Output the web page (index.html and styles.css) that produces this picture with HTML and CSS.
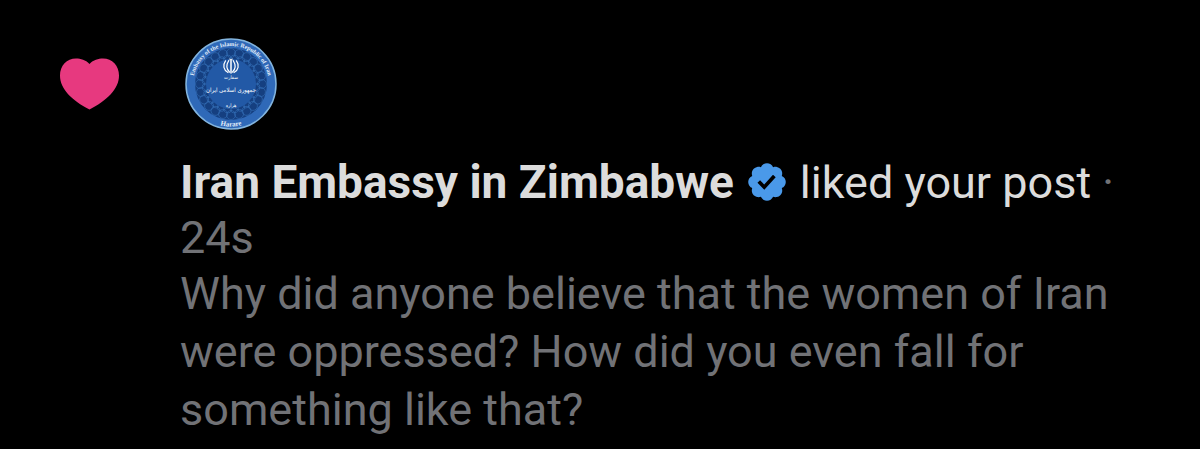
FILE: index.html
```html
<!DOCTYPE html>
<html lang="en">
<head>
<meta charset="utf-8">
<meta name="viewport" content="width=device-width, initial-scale=1">
<title>Notifications</title>
<link rel="stylesheet" href="styles.css">
</head>
<body>
<article class="notification">
  <svg class="heart" viewBox="0 0 60 52" role="img" aria-label="Like">
    <path d="M29.500 6C33.500 1.800 38.200 0.500 43 0.500C52.200 0.500 59 7.500 59 17.500C59 31 47 42.500 29.500 51.500C12 42.500 0 31 0 17.500C0 7.500 6.800 0.500 16 0.500C20.800 0.500 25.500 1.800 29.500 6Z"/>
  </svg>
  <div class="content">
    <a class="avatar" href="#" aria-label="Iran Embassy in Zimbabwe">
      <svg class="seal" viewBox="0 0 92 92" aria-hidden="true">
        <defs>
          <path id="top-arc" d="M8 46a38 38 0 0 1 76 0"/>
          <path id="bottom-arc" d="M3.500 46a42.500 42.500 0 0 0 85 0"/>
          <g id="petals" fill="none" stroke="#3470b8" stroke-width="0.600">
            <circle cx="46" cy="15" r="4.500"/>
            <circle cx="46" cy="15" r="4.500" transform="rotate(15 46 46)"/>
            <circle cx="46" cy="15" r="4.500" transform="rotate(30 46 46)"/>
            <circle cx="46" cy="15" r="4.500" transform="rotate(45 46 46)"/>
            <circle cx="46" cy="15" r="4.500" transform="rotate(60 46 46)"/>
            <circle cx="46" cy="15" r="4.500" transform="rotate(75 46 46)"/>
            <circle cx="46" cy="21" r="4" transform="rotate(7.500 46 46)"/>
            <circle cx="46" cy="21" r="4" transform="rotate(22.500 46 46)"/>
            <circle cx="46" cy="21" r="4" transform="rotate(37.500 46 46)"/>
            <circle cx="46" cy="21" r="4" transform="rotate(52.500 46 46)"/>
            <circle cx="46" cy="21" r="4" transform="rotate(67.500 46 46)"/>
            <circle cx="46" cy="21" r="4" transform="rotate(82.500 46 46)"/>
          </g>
        </defs>
        <circle cx="46" cy="46" r="45" fill="#2f69b8" stroke="#83b5df" stroke-width="1.500"/>
        <circle cx="46" cy="46" r="36" fill="#153f80"/>
        <use href="#petals"/>
        <use href="#petals" transform="rotate(90 46 46)"/>
        <use href="#petals" transform="rotate(180 46 46)"/>
        <use href="#petals" transform="rotate(270 46 46)"/>
        <circle cx="46" cy="46" r="25" fill="#2259a6"/>
        <text class="seal-ring"><textPath href="#top-arc" startOffset="50%">Embassy of the Islamic Republic of Iran</textPath></text>
        <text class="seal-ring seal-city"><textPath href="#bottom-arc" startOffset="50%">Harare</textPath></text>
        <g fill="none" stroke="#fff" stroke-linecap="round">
          <path stroke-width="1.500" d="M46 22.500V35"/>
          <path stroke-width="1.200" d="M43.800 22.500C41.300 26.500 41.500 31 44.500 34M48.200 22.500C50.700 26.500 50.500 31 47.500 34"/>
          <path stroke-width="1.200" d="M40.500 22.800C37.500 27 38.500 32 43 34.500M51.500 22.800C54.500 27 53.500 32 49 34.500"/>
          <path stroke-width="1" d="M44.600 21.200Q46 22 47.400 21.200"/>
        </g>
        <g class="seal-script" lang="fa">
          <text x="46" y="41" font-size="5">سفارت</text>
          <text x="46" y="54" font-size="6">جمهوری اسلامی ایران</text>
          <text x="46" y="69" font-size="5">هراره</text>
        </g>
      </svg>
    </a>
    <p class="headline"><strong class="name">Iran Embassy in Zimbabwe</strong><svg class="badge" viewBox="0 0 22 22" role="img" aria-label="Verified"><path d="M20.396 11c-.018-.646-.215-1.275-.57-1.816-.354-.54-.852-.972-1.438-1.246.223-.607.27-1.264.14-1.897-.131-.634-.437-1.218-.882-1.687-.47-.445-1.053-.75-1.687-.882-.633-.13-1.29-.083-1.897.14-.273-.587-.704-1.086-1.245-1.44S11.647 1.62 11 1.604c-.646.017-1.273.213-1.813.568s-.969.854-1.24 1.44c-.608-.223-1.267-.272-1.902-.14-.635.13-1.22.436-1.69.882-.445.47-.749 1.055-.878 1.688-.13.633-.08 1.29.144 1.896-.587.274-1.087.705-1.443 1.245-.356.54-.555 1.17-.574 1.817.02.647.218 1.276.574 1.817.356.54.856.972 1.443 1.245-.224.606-.274 1.263-.144 1.896.13.634.433 1.218.877 1.688.47.443 1.054.747 1.687.878.633.132 1.29.084 1.897-.136.274.586.705 1.084 1.246 1.439.54.354 1.17.551 1.816.569.647-.016 1.276-.213 1.817-.567s.972-.854 1.245-1.44c.604.239 1.266.296 1.903.164.636-.132 1.22-.447 1.68-.907.46-.46.776-1.044.908-1.681s.075-1.299-.165-1.903c.586-.274 1.084-.705 1.439-1.246.354-.54.551-1.17.569-1.816zM9.662 14.85l-3.429-3.428 1.293-1.302 2.072 2.072 4.4-4.794 1.347 1.246z"/></svg>liked your post <span class="muted">· <time>24s</time></span></p>
    <p class="post muted">Why did anyone believe that the women of Iran were oppressed? How did you even fall for something like that?</p>
  </div>
</article>
</body>
</html>
```
FILE: styles.css
```css
body {
  margin: 0;
  background: #000;
  color: #dcdcdc;
  font-family: Roboto, "Liberation Sans", sans-serif;
  font-size: 45px;
}

.notification {
  display: grid;
  grid-template-columns: 60px 1fr;
  column-gap: 60px;
  align-items: start;
  padding: 38px 60px 10px;
}

.heart {
  width: 60px;
  height: 52px;
  margin-top: 20px;
  fill: #e7397f;
}

.avatar {
  display: block;
  width: 92px;
  height: 92px;
  margin: 0 0 25px 5px;
}

.seal {
  display: block;
  width: 100%;
  height: 100%;
}

.seal-ring {
  fill: #e4effa;
  font: bold 6px "Liberation Serif", serif;
  text-anchor: middle;
}

.seal-city {
  font-size: 7px;
}

.seal-script {
  fill: #fff;
  font-family: "DejaVu Sans Condensed", "DejaVu Sans", sans-serif;
  text-anchor: middle;
}

.headline,
.post {
  margin: 0;
}

.headline {
  line-height: 55px;
}

.name {
  font-size: 46px;
  line-height: 1;
}

.post {
  line-height: 58px;
}

.badge {
  width: 44px;
  height: 44px;
  margin: 0 11px;
  vertical-align: -6px;
  fill: #4a99e9;
}

.muted {
  color: #717276;
}
```
